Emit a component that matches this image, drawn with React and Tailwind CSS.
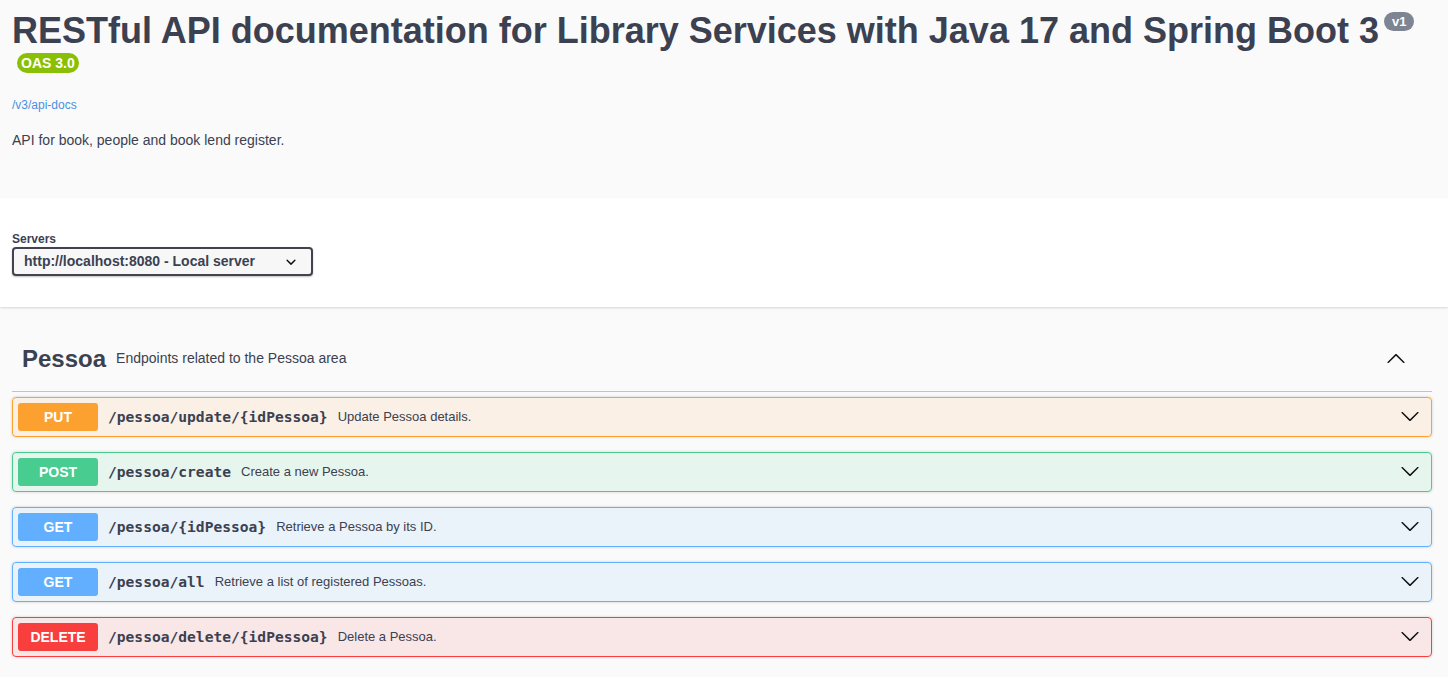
import React from "react";

const ops = [
  { method: "PUT", path: "/pessoa/update/{idPessoa}", desc: "Update Pessoa details.", row: "bg-[#fca130]/10 border-[#fca130]", badge: "bg-[#fca130]" },
  { method: "POST", path: "/pessoa/create", desc: "Create a new Pessoa.", row: "bg-[#49cc90]/10 border-[#49cc90]", badge: "bg-[#49cc90]" },
  { method: "GET", path: "/pessoa/{idPessoa}", desc: "Retrieve a Pessoa by its ID.", row: "bg-[#61affe]/10 border-[#61affe]", badge: "bg-[#61affe]" },
  { method: "GET", path: "/pessoa/all", desc: "Retrieve a list of registered Pessoas.", row: "bg-[#61affe]/10 border-[#61affe]", badge: "bg-[#61affe]" },
  { method: "DELETE", path: "/pessoa/delete/{idPessoa}", desc: "Delete a Pessoa.", row: "bg-[#f93e3e]/10 border-[#f93e3e]", badge: "bg-[#f93e3e]" },
];

function Arrow({ className = "" }) {
  return (
    <svg className={className} width="20" height="20" viewBox="0 0 20 20" fill="#111">
      <path d="M17.418 6.109c.272-.268.709-.268.979 0s.271.701 0 .969l-7.908 7.83c-.27.268-.707.268-.979 0l-7.908-7.83c-.27-.268-.27-.701 0-.969.271-.268.709-.268.979 0L10 13.25l7.418-7.141z" />
    </svg>
  );
}

function OpRow({ op }) {
  return (
    <div className={`mb-[15px] flex h-[40px] items-center rounded-[4px] border px-[5px] shadow-[0_0_3px_rgba(0,0,0,0.19)] ${op.row}`}>
      <span className={`flex h-[28px] w-[80px] shrink-0 items-center justify-center rounded-[3px] text-[14px] font-bold text-white ${op.badge}`}>
        {op.method}
      </span>
      <span className="px-[10px] font-['DejaVu_Sans_Mono',monospace] text-[14.6px] font-bold text-[#3b4151]">{op.path}</span>
      <span className="flex-1 text-[13px] text-[#3b4151]">{op.desc}</span>
      <Arrow className="mr-[6px] -mt-[2px] shrink-0" />
    </div>
  );
}

export default function App() {
  return (
    <div className="min-h-screen bg-[#fafafa] font-['Liberation_Sans',Arial,sans-serif] text-[#3b4151]">
      {/* info */}
      <div className="h-[198px] pl-3 pr-4 pt-[10px]">
        <h2 className="text-[36px] font-bold leading-[41px]">
          RESTful API documentation for Library Services with Java 17 and Spring Boot 3
          <span className="relative top-[2px] ml-[5px] inline-block h-[19px] rounded-full bg-[#7d8492] px-2 align-top text-[13px] font-bold leading-[19px] text-white">
            v1
          </span>
          <span className="relative top-[2px] ml-[5px] inline-block h-[20px] rounded-full bg-[#89bf04] px-1 align-top text-[14px] font-bold leading-[20px] text-white">
            OAS 3.0
          </span>
        </h2>
        <a className="mt-[6px] block text-[12px] leading-[14px] text-[#4990e2]">/v3/api-docs</a>
        <p className="mt-[20px] text-[14px] leading-[16px]">API for book, people and book lend register.</p>
      </div>

      {/* servers */}
      <div className="bg-white pb-[31px] pl-3 pr-4 pt-[34px] shadow-[0_1px_2px_0_rgba(0,0,0,0.15)]">
        <div className="text-[12px] font-bold leading-[14px]">Servers</div>
        <div className="mt-[1px] flex h-[29px] w-[301px] items-center justify-between rounded-[4px] border-2 border-[#41444e] bg-[#f7f7f7] pl-[10px] pr-[10px] shadow-[0_1px_2px_0_rgba(0,0,0,0.25)]">
          <span className="text-[14px] font-bold">http://localhost:8080 - Local server</span>
          <svg width="20" height="20" viewBox="0 0 20 20" fill="#111">
            <path d="M13.418 7.859a.695.695 0 01.978 0 .68.68 0 010 .969l-3.908 3.83a.697.697 0 01-.979 0l-3.908-3.83a.68.68 0 010-.969.695.695 0 01.978 0L10 11l3.418-3.141z" />
          </svg>
        </div>
      </div>

      {/* tag section */}
      <div className="pl-3 pr-4 pt-[19px]">
        <div className="flex h-[66px] items-center border-b border-[rgba(59,65,81,0.3)] pr-[26px]">
          <h3 className="pl-[10px] text-[24px] font-bold">Pessoa</h3>
          <span className="flex-1 pl-[10px] text-[14px]">Endpoints related to the Pessoa area</span>
          <Arrow className="rotate-180" />
        </div>
        <div className="pt-[5px]">
          {ops.map((op) => (
            <OpRow key={op.path} op={op} />
          ))}
        </div>
      </div>
    </div>
  );
}
